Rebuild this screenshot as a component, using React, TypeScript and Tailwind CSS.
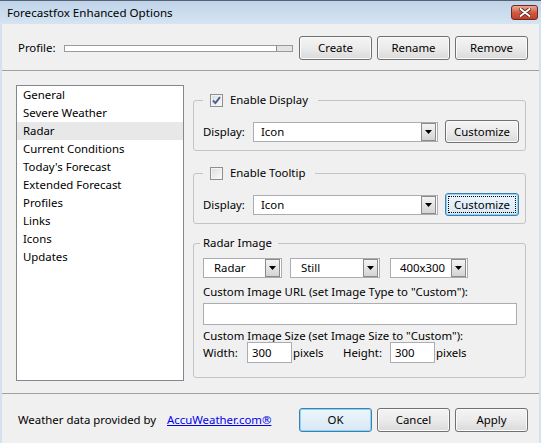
import React from "react";

const font = "font-['Noto_Sans','DejaVu_Sans',sans-serif]";

function Btn({
  label,
  focused,
  dotted,
  className,
}: {
  label: string;
  focused?: boolean;
  dotted?: boolean;
  className: string;
}) {
  return (
    <div
      className={`flex rounded-[3px] border ${
        focused
          ? "border-[#3c7fb1] bg-linear-to-b from-[#eef6fc] to-[#d7e8f4] shadow-[inset_0_0_0_1px_#8fd2f5]"
          : "border-[#707070] bg-linear-to-b from-[#f4f4f4] via-[#ebebeb] to-[#dadada] shadow-[inset_0_0_0_1px_#fbfbfb]"
      } ${className}`}
    >
      <div
        className={`flex flex-1 items-center justify-center ${
          dotted ? "m-[2px] border border-dotted border-black" : ""
        }`}
      >
        {label}
      </div>
    </div>
  );
}

function Select({ value, className }: { value: string; className: string }) {
  return (
    <div className={`flex h-[20px] border border-[#abadb3] bg-white ${className}`}>
      <div className="flex flex-1 items-center">{value}</div>
      <div className="mr-[1px] flex w-[15px] items-center justify-center border border-[#8a8a8a] bg-linear-to-b from-[#f4f4f4] to-[#d4d4d4]">
        <svg width="7" height="4" viewBox="0 0 7 4">
          <path d="M0 0h7L3.5 4z" fill="#000" />
        </svg>
      </div>
    </div>
  );
}

function Checkbox({ checked }: { checked?: boolean }) {
  return (
    <div className="flex h-[13px] w-[13px] items-center justify-center border border-[#8e8f8f] bg-linear-to-br from-[#dcdcdc] to-[#fbfbfb] shadow-[inset_0_0_0_1px_#f4f4f4]">
      {checked && (
        <svg width="9" height="9" viewBox="0 0 9 9">
          <path d="M1 4.5l2.4 2.6L8 1.2" fill="none" stroke="#4a5f97" strokeWidth="1.9" />
        </svg>
      )}
    </div>
  );
}

function DisplayGroup({ title, checked, focused }: { title: string; checked?: boolean; focused?: boolean }) {
  return (
    <fieldset className="min-w-0 rounded-[3px] border border-[#c4c4c4] pb-[7px] pl-[9px] pr-[6px]">
      <legend className="px-[7px] pr-[10px]">
        <div className="flex h-[14px] items-center">
          <Checkbox checked={checked} />
          <span className="ml-[7px]">{title}</span>
        </div>
      </legend>
      <div className="mt-[13px] flex h-[23px] items-center">
        <span className="w-[50px]">Display:</span>
        <Select value="Icon" className="w-[185px] pl-[7px]" />
        <Btn
          label="Customize"
          focused={focused}
          dotted={focused}
          className="ml-[7px] h-[23px] w-[74px]"
        />
      </div>
    </fieldset>
  );
}

const sections = [
  "General",
  "Severe Weather",
  "Radar",
  "Current Conditions",
  "Today's Forecast",
  "Extended Forecast",
  "Profiles",
  "Links",
  "Icons",
  "Updates",
];

export default function App() {
  return (
    <div className={`flex h-[443px] w-[541px] flex-col overflow-hidden bg-[#f0f0f0] text-[11.4px] text-black ${font}`}>
      {/* title bar */}
      <div className="flex h-[24px] shrink-0 items-center justify-between border-t border-[#56606e] bg-linear-to-b from-[#bfd3e9] to-[#d6e4f2] pl-[7px] pr-[3px]">
        <span className="text-[11.6px]">Forecastfox Enhanced Options</span>
        <div className="flex h-[15px] w-[27px] items-center justify-center rounded-[3px] border border-[#6d2a1e] bg-linear-to-b from-[#e9a999] via-[#d45a42] to-[#c0402a]">
          <svg width="12" height="9" viewBox="0 0 12 9">
            <path d="M1.5 1l9 7M10.5 1l-9 7" stroke="#5a2014" strokeWidth="3.6" strokeLinecap="round" />
            <path d="M1.5 1l9 7M10.5 1l-9 7" stroke="#fff" strokeWidth="2" strokeLinecap="round" />
          </svg>
        </div>
      </div>

      <div className="flex flex-1 flex-col border-x-2 border-[#d3e1f0]">
        {/* profile row */}
        <div className="flex h-[46px] items-center pl-[16px] pr-[11px] pt-[2px]">
          <span className="w-[46px]">Profile:</span>
          <div className="flex h-[7px] w-[229px] border border-[#9a9a9a] bg-white">
            <div className="flex-1" />
            <div className="w-[16px] border-l border-[#8a8a8a] bg-[#e4e4e4]" />
          </div>
          <div className="ml-auto flex gap-[5px]">
            <Btn label="Create" className="h-[24px] w-[73px]" />
            <Btn label="Rename" className="h-[24px] w-[73px]" />
            <Btn label="Remove" className="h-[24px] w-[73px]" />
          </div>
        </div>

        <div className="h-px bg-[#a0a0a0]" />

        {/* main */}
        <div className="flex h-[322px] pl-[14px]">
          <div className="mt-[14px] flex h-[296px] w-[168px] flex-col border border-[#828790] bg-white">
            {sections.map((s) => (
              <div
                key={s}
                className={`flex h-[18px] shrink-0 items-center pl-[6px] ${s === "Radar" ? "bg-[#e8e8e8]" : ""}`}
              >
                {s}
              </div>
            ))}
          </div>

          <div className="ml-[9px] mt-[22px] flex w-[333px] flex-col">
            <DisplayGroup title="Enable Display" checked />
            <div className="mt-[15px]">
              <DisplayGroup title="Enable Tooltip" focused />
            </div>

            <fieldset className="mt-[12px] min-w-0 rounded-[3px] border border-[#c4c4c4] pb-[14px] pl-[9px] pr-[6px]">
              <legend className="-ml-[3px] px-[3px] pr-[6px]">
                <div className="flex h-[14px] items-center">Radar Image</div>
              </legend>
              <div className="mt-[8px] flex">
                <Select value="Radar" className="w-[79px] pl-[10px]" />
                <Select value="Still" className="ml-[8px] w-[90px] pl-[10px]" />
                <Select value="400x300" className="ml-[10px] w-[78px] pl-[9px]" />
              </div>
              <div className="mt-[6px] h-[16px] leading-[16px]">
                Custom Image URL (set Image Type to "Custom"):
              </div>
              <div className="mt-[3px] h-[22px] w-[314px] border border-[#abadb3] bg-white" />
              <div className="mt-[5px] h-[12px] leading-[12px]">
                Custom Image Size (set Image Size to "Custom"):
              </div>
              <div className="flex h-[21px] items-center">
                <span className="w-[44px]">Width:</span>
                <div className="flex h-[21px] w-[45px] items-center border border-[#abadb3] bg-white pl-[4px]">300</div>
                <span className="ml-[1px] w-[50px]">pixels</span>
                <span className="w-[47px]">Height:</span>
                <div className="flex h-[21px] w-[45px] items-center border border-[#abadb3] bg-white pl-[4px]">300</div>
                <span className="ml-[1px]">pixels</span>
              </div>
            </fieldset>
          </div>
        </div>

        <div className="h-px bg-[#a0a0a0]" />

        {/* footer */}
        <div className="flex flex-1 items-center pl-[16px] pr-[11px] pt-[3px]">
          <span className="w-[149px]">Weather data provided by</span>
          <span className="text-[#0000ee] underline">AccuWeather.com®</span>
          <div className="ml-auto flex gap-[5px]">
            <Btn label="OK" focused className="h-[24px] w-[73px]" />
            <Btn label="Cancel" className="h-[24px] w-[73px]" />
            <Btn label="Apply" className="h-[24px] w-[73px]" />
          </div>
        </div>
      </div>
    </div>
  );
}
